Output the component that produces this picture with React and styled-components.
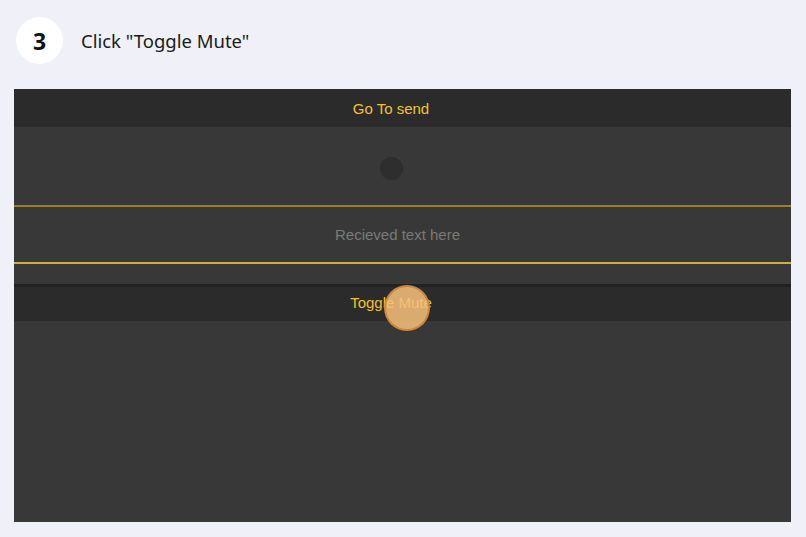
import React from 'react';
import styled, { createGlobalStyle } from 'styled-components';

const GlobalStyle = createGlobalStyle`
  html, body {
    margin: 0;
    padding: 0;
    background: #eff0f8;
  }
`;

const Page = styled.div`
  width: 806px;
  height: 537px;
  box-sizing: border-box;
  padding: 17px 15px 0 14px;
  font-family: 'Noto Sans', 'Open Sans', sans-serif;
`;

const StepHeader = styled.div`
  display: flex;
  align-items: center;
  height: 47px;
  padding-left: 2px;
  gap: 18px;
`;

const StepBadge = styled.div`
  width: 47px;
  height: 47px;
  border-radius: 50%;
  background: #ffffff;
  display: flex;
  align-items: center;
  justify-content: center;
  font-size: 23px;
  font-weight: 700;
  color: #111;
`;

const StepTitle = styled.div`
  font-size: 18.5px;
  color: #1b1b1b;
`;

const Screen = styled.div`
  margin-top: 25px;
  height: 433px;
  background: #383838;
  display: flex;
  flex-direction: column;
  font-family: 'Liberation Sans', Arial, sans-serif;
  position: relative;
`;

const Bar = styled.div`
  height: ${(p) => p.$height}px;
  background: #2b2b2b;
  border-top: ${(p) => (p.$edge ? '3px solid #222' : 'none')};
  box-sizing: content-box;
  display: flex;
  align-items: center;
  justify-content: center;
  padding-right: 23px;
  padding-bottom: ${(p) => (p.$edge ? 4 : 0)}px;
  color: #f2c232;
  font-size: 15px;
`;

const DotRow = styled.div`
  height: 78px;
  box-sizing: border-box;
  padding: 4px 22px 0 0;
  display: flex;
  align-items: center;
  justify-content: center;
`;

const Dot = styled.div`
  width: 23px;
  height: 23px;
  border-radius: 50%;
  background: #2e2e2e;
`;

const Received = styled.div`
  height: 55px;
  border-top: 2px solid #9a7f33;
  border-bottom: 2px solid #d6ad32;
  display: flex;
  align-items: center;
  justify-content: center;
  padding-right: 10px;
  color: #7a7a7a;
  font-size: 15px;
`;

const Spacer = styled.div`
  height: ${(p) => p.$height}px;
`;

const ClickMark = styled.div`
  position: absolute;
  left: 370px;
  top: 196px;
  width: 42px;
  height: 42px;
  border-radius: 50%;
  background: rgba(246, 192, 122, 0.86);
  border: 2px solid rgba(205, 128, 55, 0.85);
`;

export default function App() {
  return (
    <>
      <GlobalStyle />
      <Page>
        <StepHeader>
          <StepBadge>3</StepBadge>
          <StepTitle>Click "Toggle Mute"</StepTitle>
        </StepHeader>
        <Screen>
          <Bar $height={38}>Go To send</Bar>
          <DotRow>
            <Dot />
          </DotRow>
          <Received>Recieved text here</Received>
          <Spacer $height={20} />
          <Bar $height={30} $edge>Toggle Mute</Bar>
          <ClickMark />
        </Screen>
      </Page>
    </>
  );
}
